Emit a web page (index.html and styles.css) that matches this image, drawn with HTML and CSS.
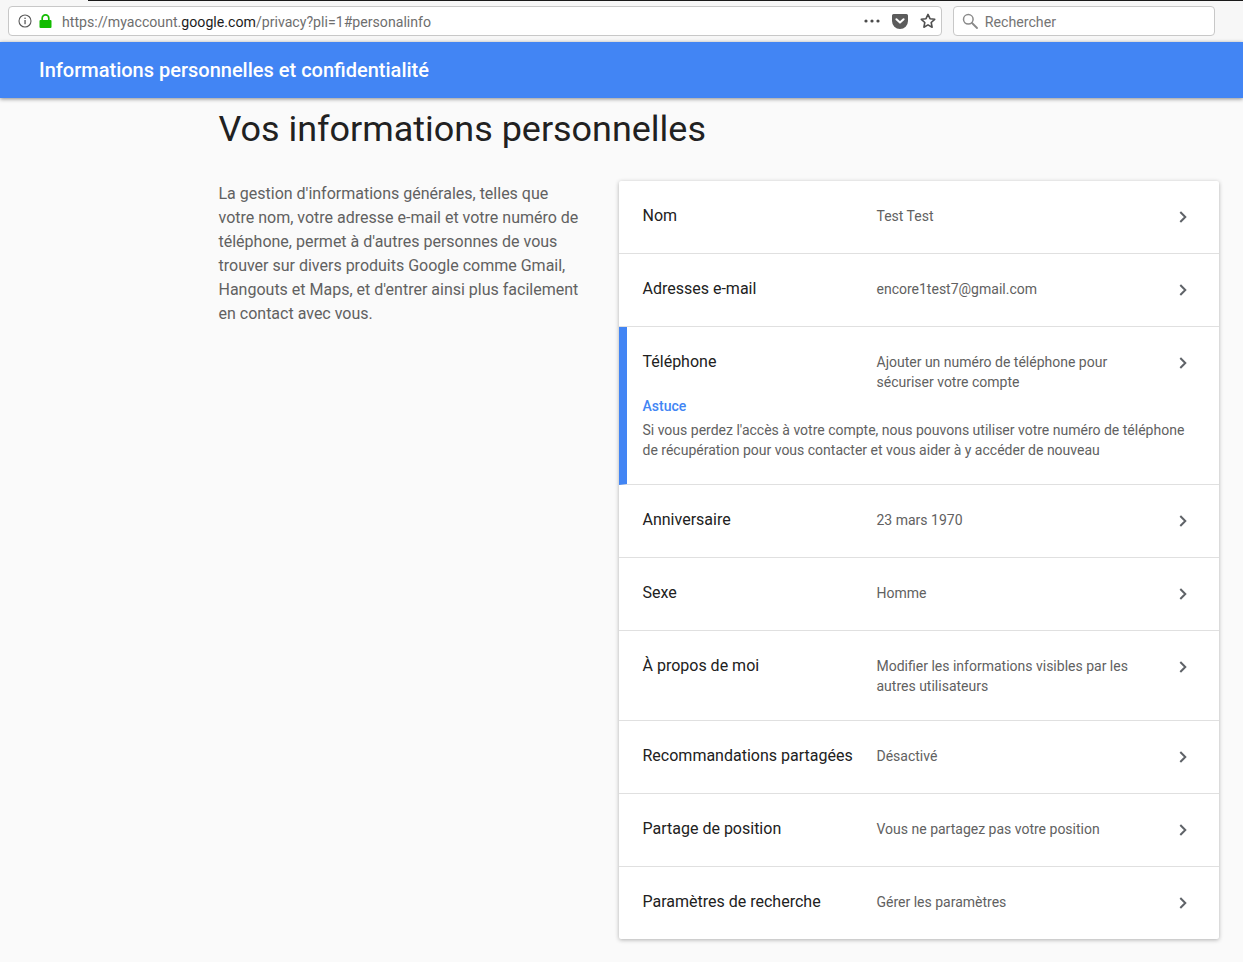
FILE: index.html
```html
<!DOCTYPE html>
<html lang="fr">
<head>
<meta charset="utf-8">
<title>Informations personnelles et confidentialité</title>
<link rel="stylesheet" href="styles.css">
</head>
<body>
<div class="browser">
  <div class="urlbar">
    <svg class="ic-info" viewBox="0 0 14 14" width="14" height="14"><circle cx="7" cy="7" r="6" fill="none" stroke="#5a5a5a" stroke-width="1.1"/><rect x="6.4" y="6" width="1.3" height="4.2" fill="#5a5a5a"/><rect x="6.4" y="3.6" width="1.3" height="1.4" fill="#5a5a5a"/></svg>
    <svg class="ic-lock" viewBox="0 0 13 14" width="13" height="14"><path d="M3.2 6V4.2a3.3 3.3 0 0 1 6.6 0V6" fill="none" stroke="#12bc00" stroke-width="1.7"/><rect x="0.5" y="6" width="12" height="8" rx="1" fill="#12bc00"/></svg>
    <div class="url">https://myaccount.<b>google.com</b>/privacy?pli=1#personalinfo</div>
    <svg class="ic-dots" viewBox="0 0 16 4" width="16" height="4"><circle cx="2" cy="2" r="1.6" fill="#4a4a4a"/><circle cx="8" cy="2" r="1.6" fill="#4a4a4a"/><circle cx="14" cy="2" r="1.6" fill="#4a4a4a"/></svg>
    <svg class="ic-pocket" viewBox="0 0 16 15" width="16" height="15"><path d="M1.600 0h12.800A1.600 1.600 0 0 1 16 1.600V7A8 8 0 0 1 0 7V1.600A1.600 1.600 0 0 1 1.600 0z" fill="#5c5c5c"/><path d="M4.400 5.200 8 8.600l3.600-3.400" fill="none" stroke="#fff" stroke-width="2" stroke-linecap="round" stroke-linejoin="round"/></svg>
    <svg class="ic-star" viewBox="0 0 16 16" width="16" height="16"><path d="M8 1.400l2 4.300 4.700.6-3.500 3.200.9 4.700L8 11.900l-4.100 2.300.9-4.700L1.300 6.300l4.700-.6z" fill="none" stroke="#4f4f4f" stroke-width="1.600" stroke-linejoin="round"/></svg>
  </div>
  <div class="searchbar">
    <svg viewBox="0 0 16 16" width="16" height="16"><circle cx="6.300" cy="6.300" r="4.800" fill="none" stroke="#8a8a8a" stroke-width="1.500"/><path d="M10 10l5 5" stroke="#8a8a8a" stroke-width="1.800" stroke-linecap="round"/></svg>
    <span>Rechercher</span>
  </div>
</div>
<header class="appbar">Informations personnelles et confidentialité</header>
<main class="page">
  <h1>Vos informations personnelles</h1>
  <div class="columns">
    <p class="intro">La gestion d'informations générales, telles que votre nom, votre adresse e-mail et votre numéro de téléphone, permet à d'autres personnes de vous trouver sur divers produits Google comme Gmail, Hangouts et Maps, et d'entrer ainsi plus facilement en contact avec vous.</p>
    <section class="card">
      <div class="row">
        <div class="label">Nom</div><div class="value">Test Test</div>
        <svg class="chev" viewBox="0 0 8 12" width="8" height="12"><path d="M1.300 1l5 5-5 5" fill="none" stroke="#5f6368" stroke-width="2"/></svg>
      </div>
      <div class="row">
        <div class="label">Adresses e-mail</div><div class="value">encore1test7@gmail.com</div>
        <svg class="chev" viewBox="0 0 8 12" width="8" height="12"><path d="M1.300 1l5 5-5 5" fill="none" stroke="#5f6368" stroke-width="2"/></svg>
      </div>
      <div class="row tip">
        <div class="label">Téléphone</div><div class="value">Ajouter un numéro de téléphone pour sécuriser votre compte</div>
        <svg class="chev" viewBox="0 0 8 12" width="8" height="12"><path d="M1.300 1l5 5-5 5" fill="none" stroke="#5f6368" stroke-width="2"/></svg>
        <div class="hint">
          <div class="hint-title">Astuce</div>
          <div class="hint-text">Si vous perdez l'accès à votre compte, nous pouvons utiliser votre numéro de téléphone de récupération pour vous contacter et vous aider à y accéder de nouveau</div>
        </div>
      </div>
      <div class="row">
        <div class="label">Anniversaire</div><div class="value">23 mars 1970</div>
        <svg class="chev" viewBox="0 0 8 12" width="8" height="12"><path d="M1.300 1l5 5-5 5" fill="none" stroke="#5f6368" stroke-width="2"/></svg>
      </div>
      <div class="row">
        <div class="label">Sexe</div><div class="value">Homme</div>
        <svg class="chev" viewBox="0 0 8 12" width="8" height="12"><path d="M1.300 1l5 5-5 5" fill="none" stroke="#5f6368" stroke-width="2"/></svg>
      </div>
      <div class="row">
        <div class="label">À propos de moi</div><div class="value">Modifier les informations visibles par les autres utilisateurs</div>
        <svg class="chev" viewBox="0 0 8 12" width="8" height="12"><path d="M1.300 1l5 5-5 5" fill="none" stroke="#5f6368" stroke-width="2"/></svg>
      </div>
      <div class="row">
        <div class="label">Recommandations partagées</div><div class="value">Désactivé</div>
        <svg class="chev" viewBox="0 0 8 12" width="8" height="12"><path d="M1.300 1l5 5-5 5" fill="none" stroke="#5f6368" stroke-width="2"/></svg>
      </div>
      <div class="row">
        <div class="label">Partage de position</div><div class="value">Vous ne partagez pas votre position</div>
        <svg class="chev" viewBox="0 0 8 12" width="8" height="12"><path d="M1.300 1l5 5-5 5" fill="none" stroke="#5f6368" stroke-width="2"/></svg>
      </div>
      <div class="row">
        <div class="label">Paramètres de recherche</div><div class="value">Gérer les paramètres</div>
        <svg class="chev" viewBox="0 0 8 12" width="8" height="12"><path d="M1.300 1l5 5-5 5" fill="none" stroke="#5f6368" stroke-width="2"/></svg>
      </div>
    </section>
  </div>
</main>
</body>
</html>
```
FILE: styles.css
```css
* { box-sizing: border-box; }
html, body { margin: 0; height: 100%; overflow: hidden; }
body {
  background: #fafafa;
  font-family: Roboto, "Liberation Sans", sans-serif;
  color: #212121;
}
.browser {
  height: 42px;
  background: linear-gradient(90deg, #f7f7f7 0 88px, #1a1a1a 88px) top / 100% 1px no-repeat, #f7f7f7;
  padding: 6px 28px 0 8px;
  display: flex;
  gap: 11px;
  align-items: flex-start;
}
.urlbar, .searchbar {
  height: 30px;
  background: #fff;
  border: 1px solid #c8c8c8;
  border-radius: 4px;
  display: flex;
  align-items: center;
}
.urlbar { width: 935px; padding: 0 5px 0 9px; }
.searchbar { width: 262px; padding-left: 8px; }
.searchbar span { margin-left: 6.5px; font-size: 14.2px; line-height: 30px; padding-top: 1px; color: #757575; }
.ic-lock { margin-left: 7px; }
.url { margin-left: 10px; flex: 1; font-size: 14.15px; line-height: 30px; padding-top: 1px; color: #6e6e6e; white-space: nowrap; }
.url b { font-weight: 400; color: #1c1c1c; }
.ic-dots { margin-right: 12px; }
.ic-pocket { margin-right: 12px; }
.appbar {
  position: relative;
  height: 56px;
  background: #4285f4;
  color: #fff;
  font-size: 20px;
  font-weight: 500;
  line-height: 56px;
  padding-left: 39px;
  box-shadow: 0 1px 4px rgba(0, 0, 0, .45);
}
.page { padding: 1px 0 0 218.5px; }
h1 {
  margin: 0;
  font-size: 35.95px;
  font-weight: 400;
  line-height: 60px;
  color: #212121;
}
.columns {
  display: flex;
  margin-top: 22px;
  align-items: flex-start;
}
.intro {
  width: 400.5px;
  margin: 1px 0 0;
  padding-right: 38px;
  font-size: 16px;
  line-height: 24px;
  color: #616161;
}
.card {
  width: 600px;
  background: #fff;
  box-shadow: 0 1px 4px rgba(0, 0, 0, .3);
  border-radius: 2px;
}
.row {
  position: relative;
  display: grid;
  grid-template-columns: 234px 1fr;
  padding: 24px 72px 24px 23.5px;
  border-bottom: 1px solid #e0e0e0;
  min-height: 73px;
}
.row:last-child { border-bottom: 0; min-height: 72px; }
.label { font-size: 16px; line-height: 22px; color: #212121; }
.value { font-size: 14px; line-height: 20px; margin-top: 1px; color: #616161; }
.chev { position: absolute; right: 32px; top: 30px; }
.tip { border-left: 8px solid #4285f4; padding-left: 15.5px; padding-right: 24px; }
.tip .value { padding-right: 48px; }
.hint { grid-column: 1 / -1; margin-top: 4px; }
.hint-title { font-size: 14px; line-height: 20px; font-weight: 500; color: #4285f4; }
.hint-text { margin-top: 4px; font-size: 14px; line-height: 20px; color: #616161; }
```
